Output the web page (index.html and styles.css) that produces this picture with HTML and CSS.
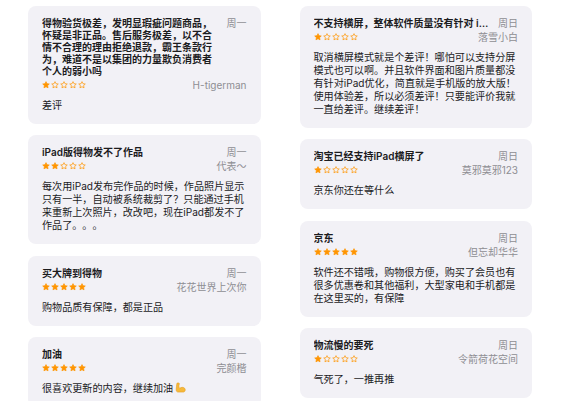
FILE: index.html
```html
<!DOCTYPE html>
<html lang="zh-CN">
<head>
    <meta charset="UTF-8">
    <title>评分及评论</title>
    <meta name="viewport" content="width=device-width, initial-scale=1.0">
    <link rel="stylesheet" href="styles.css">
</head>
<body>
    <svg width="0" height="0" class="defs">
        <symbol id="star" viewBox="0 0 10 10">
            <path d="M5 .8l1.25 2.6 2.85.35-2.1 1.95.55 2.85L5 7.15 2.45 8.55 3 5.7.9 3.75l2.85-.35z"/>
        </symbol>
    </svg>

    <main class="reviews">
        <div class="column">
            <div class="review-card">
                <div class="review-head">
                    <div class="review-title wrap">得物验货极差，发明显瑕疵问题商品，怀疑是非正品。售后服务极差，以不合情不合理的理由拒绝退款，霸王条款行为，难道不是以集团的力量欺负消费者个人的弱小吗</div>
                    <div class="review-date">周一</div>
                </div>
                <div class="review-meta">
                    <div class="stars" data-rating="1"></div>
                    <div class="review-author">H-tigerman</div>
                </div>
                <p class="review-body">差评</p>
            </div>

            <div class="review-card">
                <div class="review-head">
                    <div class="review-title">iPad版得物发不了作品</div>
                    <div class="review-date">周一</div>
                </div>
                <div class="review-meta">
                    <div class="stars" data-rating="2"></div>
                    <div class="review-author">代表～</div>
                </div>
                <p class="review-body">每次用iPad发布完作品的时候，作品照片显示只有一半，自动被系统裁剪了？只能通过手机来重新上次照片，改改吧，现在iPad都发不了作品了。。。</p>
            </div>

            <div class="review-card">
                <div class="review-head">
                    <div class="review-title">买大牌到得物</div>
                    <div class="review-date">周一</div>
                </div>
                <div class="review-meta">
                    <div class="stars" data-rating="5"></div>
                    <div class="review-author">花花世界上次你</div>
                </div>
                <p class="review-body">购物品质有保障，都是正品</p>
            </div>

            <div class="review-card">
                <div class="review-head">
                    <div class="review-title">加油</div>
                    <div class="review-date">周一</div>
                </div>
                <div class="review-meta">
                    <div class="stars" data-rating="5"></div>
                    <div class="review-author">完颜楷</div>
                </div>
                <p class="review-body">很喜欢更新的内容，继续加油<svg class="muscle" viewBox="0 0 12 12"><path d="M2.1 1.4C3.3.7 4.7.9 4.9 2.1l-.6 1.1c-.2 1.8.1 3 1 3.6 1.3-1.2 3.8-1.4 5.2 0 1.2 1.2.8 3.8-1.2 4.2H3.5c-1.6 0-2.4-1.2-2.2-3 .2-2.4.4-4.6.8-6.6z" fill="#f6b93b" stroke="#e39a18" stroke-width=".6"/></svg></p>
            </div>
        </div>

        <div class="column">
            <div class="review-card">
                <div class="review-head">
                    <div class="review-title">不支持横屏，整体软件质量没有针对 iPad 的优化</div>
                    <div class="review-date">周日</div>
                </div>
                <div class="review-meta">
                    <div class="stars" data-rating="1"></div>
                    <div class="review-author">落雪小白</div>
                </div>
                <p class="review-body">取消横屏模式就是个差评！哪怕可以支持分屏模式也可以啊。并且软件界面和图片质量都没有针对iPad优化，简直就是手机版的放大版！使用体验差，所以必须差评！只要能评价我就一直给差评。继续差评！</p>
            </div>

            <div class="review-card">
                <div class="review-head">
                    <div class="review-title">淘宝已经支持iPad横屏了</div>
                    <div class="review-date">周日</div>
                </div>
                <div class="review-meta">
                    <div class="stars" data-rating="1"></div>
                    <div class="review-author">莫邪莫邪123</div>
                </div>
                <p class="review-body">京东你还在等什么</p>
            </div>

            <div class="review-card">
                <div class="review-head">
                    <div class="review-title">京东</div>
                    <div class="review-date">周日</div>
                </div>
                <div class="review-meta">
                    <div class="stars" data-rating="5"></div>
                    <div class="review-author">但忘却华华</div>
                </div>
                <p class="review-body">软件还不错哦，购物很方便，购买了会员也有很多优惠卷和其他福利，大型家电和手机都是在这里买的，有保障</p>
            </div>

            <div class="review-card">
                <div class="review-head">
                    <div class="review-title">物流慢的要死</div>
                    <div class="review-date">周日</div>
                </div>
                <div class="review-meta">
                    <div class="stars" data-rating="1"></div>
                    <div class="review-author">令箭荷花空间</div>
                </div>
                <p class="review-body">气死了，一推再推</p>
            </div>
        </div>
    </main>

    <script>
        // fill each rating row with five stars
        document.querySelectorAll(".stars").forEach(row => {
            const rating = Number(row.dataset.rating);
            for (let i = 0; i < 5; i++) {
                const cls = i < rating ? "star filled" : "star";
                row.insertAdjacentHTML("beforeend",
                    `<svg class="${cls}" viewBox="0 0 10 10"><use href="#star"/></svg>`);
            }
        });
    </script>
</body>
</html>
```

FILE: styles.css
```css
* {
    margin: 0;
    padding: 0;
    box-sizing: border-box;
}

body {
    background: #fff;
    color: #1c1c1e;
    font-family: Inter, "Noto Sans CJK SC", sans-serif;
    text-spacing-trim: space-all;
    overflow: hidden;
}

.defs {
    position: absolute;
}

.reviews {
    display: grid;
    grid-template-columns: repeat(2, minmax(0, 1fr));
    column-gap: 39px;
    align-items: start;
    height: 401px;
    overflow: hidden;
    padding: 5.5px 29px 0 28px;
}

.column {
    display: flex;
    flex-direction: column;
    gap: 11.5px;
}

.review-card {
    background: #f2f1f6;
    border-radius: 8px;
    padding: 11px 14px 12px;
}

.review-head {
    display: flex;
    align-items: flex-start;
    gap: 9px;
}

.review-title {
    flex: 1;
    min-width: 0;
    font-size: 10px;
    line-height: 12px;
    font-weight: 600;
    white-space: nowrap;
    overflow: hidden;
    text-overflow: ellipsis;
}

.review-title.wrap {
    white-space: normal;
}

.review-date,
.review-author {
    color: #8e8e93;
    font-size: 10px;
    line-height: 12px;
    white-space: nowrap;
}

.review-meta {
    display: flex;
    justify-content: space-between;
    align-items: center;
    height: 16px;
}

.stars {
    display: flex;
    gap: 1px;
}

.star {
    width: 8px;
    height: 8px;
    fill: none;
    stroke: #ff9500;
    stroke-width: 0.9;
}

.star.filled {
    fill: #ff9500;
}

.review-body {
    margin-top: 6px;
    font-size: 10.1px;
    line-height: 13px;
    color: #1c1c1e;
}

.muscle {
    width: 11px;
    height: 11px;
    margin-left: 2px;
    vertical-align: -1px;
}
```
